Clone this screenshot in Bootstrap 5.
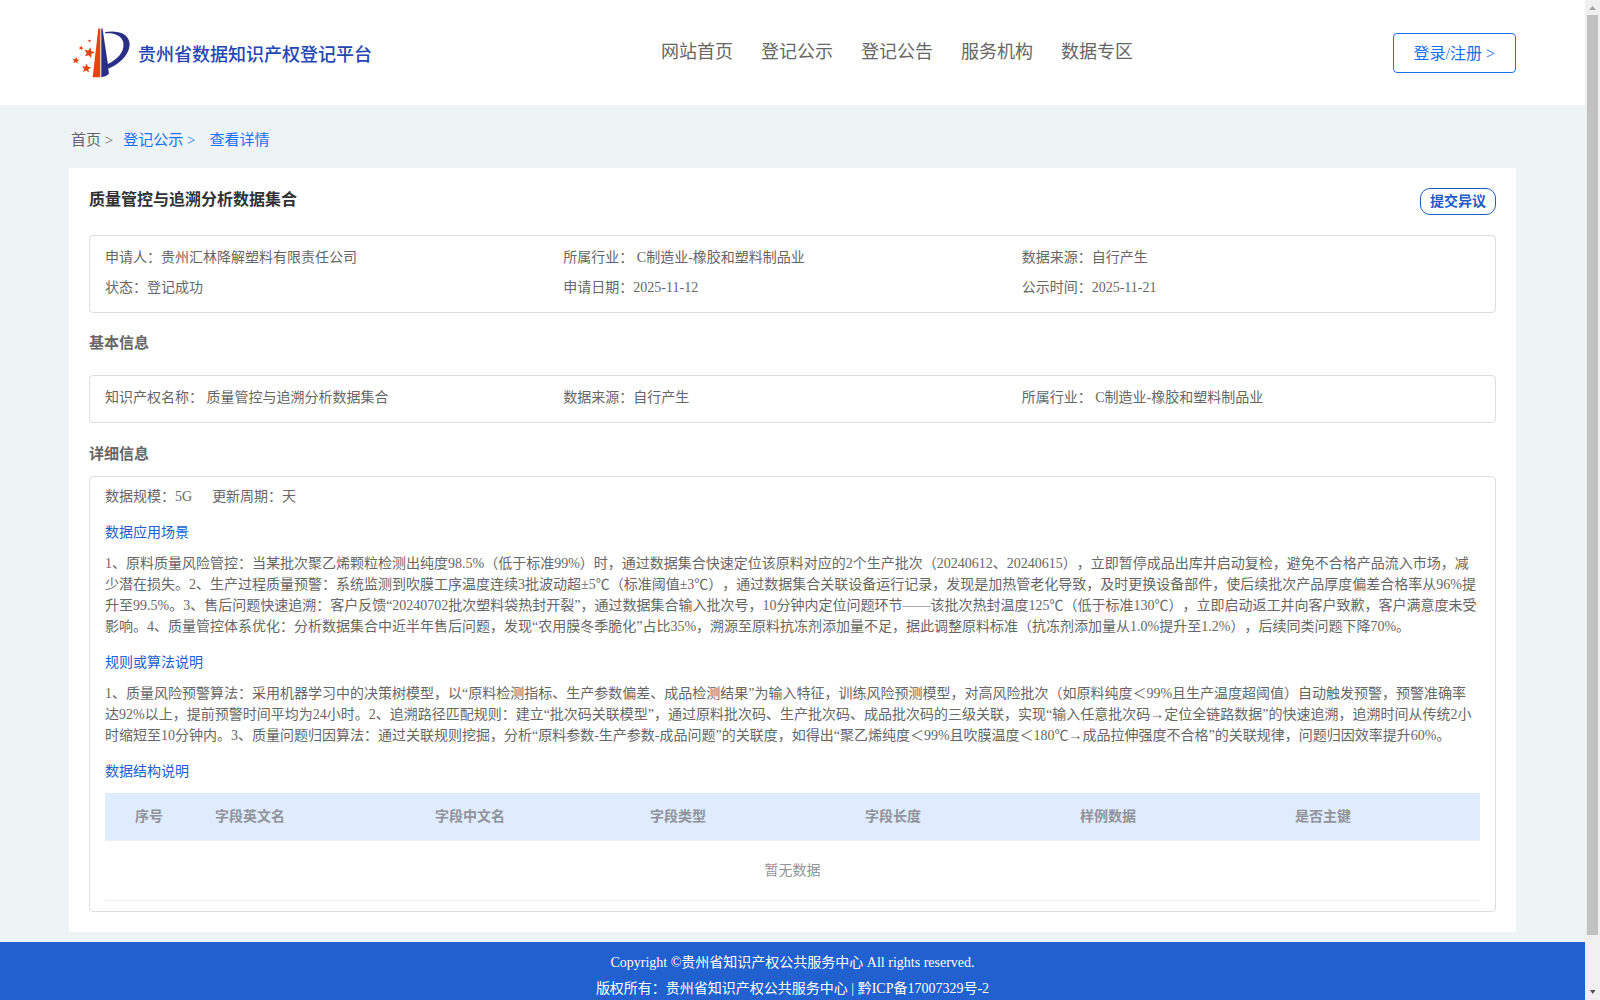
<!DOCTYPE html>
<html lang="zh-CN">
<head>
<meta charset="utf-8">
<meta name="viewport" content="width=device-width, initial-scale=1">
<title>贵州省数据知识产权登记平台</title>
<link href="https://cdn.jsdelivr.net/npm/bootstrap@5.3.0/dist/css/bootstrap.min.css" rel="stylesheet">
<style>
body{font:14px/21px "Liberation Serif","Noto Sans CJK SC",serif;color:#666;background:#eef3f6;height:100vh;overflow:hidden;text-spacing-trim:space-all}
a{text-decoration:none;color:inherit}
.page-area{width:1585px;height:1000px;overflow:hidden}
.site-header{height:105px;padding:0 69px}
.brand-side{width:592px;padding-left:3px}
.brand-title{font-size:18px;line-height:24px;font-weight:500;color:#2446b5;margin-left:7px;margin-top:5px}
.main-nav{gap:28px;font-size:18px;line-height:24px;margin-top:-1px}
.btn-login{font-size:16px;line-height:24px;border:1px solid #1770f0;color:#1770f0;border-radius:4px;padding:8px 20px 6px;height:40px}
.crumbs{font-size:15px;line-height:21px;height:63px;padding:25px 0 0 71px}
.crumbs .on{color:#1770f0}
.crumb-mid{margin-left:10px}
.crumb-last{margin-left:14px}
.panel{width:1447px;height:764px;margin-left:69px;padding:20px}
.panel-title{font-size:16px;line-height:24px;font-weight:700;color:#303133;margin:0}
.btn-object{height:27px;border:1px solid #1c5cc8;border-radius:10px;color:#1c5cc8;font-weight:700;font-size:14px;line-height:25px;padding:0 9px}
.box{border:1px solid #ddd;border-radius:4px;padding:7px 15px 9px}
.box .col-4{line-height:30px}
.box-detail{padding:9px 15px 10px}
.sec-title{font-size:15px;line-height:22px;font-weight:700;margin:0;padding:19px 0 21px}
.sec-detail{padding:20px 0 11px}
.sub-title{font-size:14px;line-height:21px;font-weight:400;color:#2160cf;margin:0 0 10px}
.sub-table{margin-bottom:11px}
.scale-row{gap:20px;margin-bottom:15px}
.box p{margin:0 0 15px}
.data-table{table-layout:fixed;width:1375px;margin:0;color:#909399}
.data-table th{background:#dfecfe;color:#909399;height:47px;padding:0 0 0 10px;vertical-align:middle;border-bottom:1px solid #ebeef5;font-weight:700}
.data-table th:first-child{padding-left:30px}
.data-table td{height:60px;padding:0;vertical-align:middle;text-align:center;border-bottom:1px solid #ebeef5;color:#909399}
.c-idx{width:100px}.c-en{width:220px}.c-std{width:215px}
.site-footer{height:58px;margin-top:10px;background:#2160cf;color:#fff;padding-top:8px;line-height:26px}
.scroll-track{width:15px;height:1000px;background:#f0f0f0}
.scroll-thumb{width:11px;height:920px;background:#c1c1c1}
</style>
</head>
<body class="d-flex">
<div class="page-area d-flex flex-column flex-shrink-0">
  <header class="site-header bg-white d-flex align-items-center flex-shrink-0">
    <div class="brand-side d-flex align-items-center flex-shrink-0">
      <svg width="59" height="51" viewBox="0 0 59 51" aria-hidden="true">
        <path fill="#e8420f" d="M26.300 1.500h2V50.200H20.700Z"/>
        <path fill="#2a2f86" d="M29.300 1.500h1.200L35.900 37C45 32.500 53 25 51.300 15.500C49.500 8.500 43.500 6 33.200 6.300V5C46 3 56 6.500 57.500 15.500C58.800 26 48 37.500 36.200 41.500L37 46.800L34 49L29.300 50.200Z"/>
        <defs><polygon id="star" points="0,-1 .26,-.36 .95,-.31 .42,.14 .59,.81 0,.45 -.59,.81 -.42,.14 -.95,-.31 -.26,-.36"/></defs>
        <g fill="#e8420f">
          <use href="#star" transform="translate(17.200 25.700) rotate(14) scale(5.600)"/>
          <use href="#star" transform="translate(3.900 33.400) rotate(8) scale(3.800)"/>
          <use href="#star" transform="translate(14.400 41.300) rotate(5) scale(4.900)"/>
          <use href="#star" transform="translate(9.100 21) rotate(22) scale(2.500)"/>
          <use href="#star" transform="translate(17.500 13.900) scale(1.700)"/>
        </g>
      </svg>
      <div class="brand-title">贵州省数据知识产权登记平台</div>
    </div>
    <nav class="main-nav d-flex">
      <a href="#">网站首页</a><a href="#">登记公示</a><a href="#">登记公告</a><a href="#">服务机构</a><a href="#">数据专区</a>
    </nav>
    <a href="#" class="btn-login ms-auto">登录/注册 &gt;</a>
  </header>

  <div class="crumbs d-flex flex-shrink-0"><a href="#">首页 &gt;</a><a href="#" class="on crumb-mid">登记公示 &gt;</a><span class="on crumb-last">查看详情</span></div>

  <main class="panel bg-white flex-shrink-0">
    <div class="d-flex justify-content-between align-items-start mb-3 pb-1">
      <h1 class="panel-title">质量管控与追溯分析数据集合</h1>
      <a href="#" class="btn-object">提交异议</a>
    </div>
    <div class="box">
      <div class="row g-0">
        <div class="col-4">申请人：贵州汇林降解塑料有限责任公司</div>
        <div class="col-4">所属行业： C制造业-橡胶和塑料制品业</div>
        <div class="col-4">数据来源：自行产生</div>
        <div class="col-4">状态：登记成功</div>
        <div class="col-4">申请日期：2025-11-12</div>
        <div class="col-4">公示时间：2025-11-21</div>
      </div>
    </div>
    <h2 class="sec-title">基本信息</h2>
    <div class="box">
      <div class="row g-0">
        <div class="col-4">知识产权名称： 质量管控与追溯分析数据集合</div>
        <div class="col-4">数据来源：自行产生</div>
        <div class="col-4">所属行业： C制造业-橡胶和塑料制品业</div>
      </div>
    </div>
    <h2 class="sec-title sec-detail">详细信息</h2>
    <div class="box box-detail">
      <div class="scale-row d-flex"><span>数据规模：5G</span><span>更新周期：天</span></div>
      <h3 class="sub-title">数据应用场景</h3>
      <p>1、原料质量风险管控：当某批次聚乙烯颗粒检测出纯度98.5%（低于标准99%）时，通过数据集合快速定位该原料对应的2个生产批次（20240612、20240615），立即暂停成品出库并启动复检，避免不合格产品流入市场，减少潜在损失。2、生产过程质量预警：系统监测到吹膜工序温度连续3批波动超±5℃（标准阈值±3℃），通过数据集合关联设备运行记录，发现是加热管老化导致，及时更换设备部件，使后续批次产品厚度偏差合格率从96%提升至99.5%。3、售后问题快速追溯：客户反馈“20240702批次塑料袋热封开裂”，通过数据集合输入批次号，10分钟内定位问题环节——该批次热封温度125℃（低于标准130℃），立即启动返工并向客户致歉，客户满意度未受影响。4、质量管控体系优化：分析数据集合中近半年售后问题，发现“农用膜冬季脆化”占比35%，溯源至原料抗冻剂添加量不足，据此调整原料标准（抗冻剂添加量从1.0%提升至1.2%），后续同类问题下降70%。</p>
      <h3 class="sub-title">规则或算法说明</h3>
      <p>1、质量风险预警算法：采用机器学习中的决策树模型，以“原料检测指标、生产参数偏差、成品检测结果”为输入特征，训练风险预测模型，对高风险批次（如原料纯度＜99%且生产温度超阈值）自动触发预警，预警准确率达92%以上，提前预警时间平均为24小时。2、追溯路径匹配规则：建立“批次码关联模型”，通过原料批次码、生产批次码、成品批次码的三级关联，实现“输入任意批次码→定位全链路数据”的快速追溯，追溯时间从传统2小时缩短至10分钟内。3、质量问题归因算法：通过关联规则挖掘，分析“原料参数-生产参数-成品问题”的关联度，如得出“聚乙烯纯度＜99%且吹膜温度＜180℃→成品拉伸强度不合格”的关联规律，问题归因效率提升60%。</p>
      <h3 class="sub-title sub-table">数据结构说明</h3>
      <table class="data-table">
        <colgroup><col class="c-idx"><col class="c-en"><col class="c-std"><col class="c-std"><col class="c-std"><col class="c-std"><col></colgroup>
        <thead><tr><th>序号</th><th>字段英文名</th><th>字段中文名</th><th>字段类型</th><th>字段长度</th><th>样例数据</th><th>是否主键</th></tr></thead>
        <tbody><tr><td colspan="7">暂无数据</td></tr></tbody>
      </table>
    </div>
  </main>

  <footer class="site-footer text-center flex-shrink-0">
    <div>Copyright ©贵州省知识产权公共服务中心 All rights reserved.</div>
    <div>版权所有：贵州省知识产权公共服务中心 | 黔ICP备17007329号-2</div>
  </footer>
</div>
<div class="scroll-track d-flex flex-column align-items-center flex-shrink-0">
  <svg width="15" height="15" viewBox="0 0 15 15"><path d="M4 10h7L7.500 6z" fill="#a3a3a3"/></svg>
  <div class="scroll-thumb"></div>
  <svg class="mt-auto" width="15" height="15" viewBox="0 0 15 15"><path d="M5 5h5.500L7.700 9z" fill="#505050"/></svg>
</div>
<script src="https://cdn.jsdelivr.net/npm/bootstrap@5.3.0/dist/js/bootstrap.bundle.min.js"></script>
</body>
</html>
